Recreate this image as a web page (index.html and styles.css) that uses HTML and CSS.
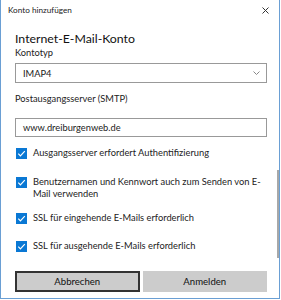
FILE: index.html
```html
<!DOCTYPE html>
<html lang="de">
<head>
<meta charset="utf-8">
<title>Konto hinzufügen</title>
<link rel="stylesheet" href="styles.css">
</head>
<body>
<div class="window">
  <div class="titlebar">
    <span class="title">Konto hinzufügen</span>
    <svg class="close" width="7" height="7" viewBox="0 0 7 7"><path d="M0.5 0.5L6.5 6.5M6.5 0.5L0.5 6.5" stroke="#333" stroke-width="1" fill="none"/></svg>
  </div>
  <div class="content">
    <h1 class="heading">Internet-E-Mail-Konto</h1>
    <div class="label">Kontotyp</div>
    <div class="field select">
      <span>IMAP4</span>
      <svg class="chevron" width="7" height="4" viewBox="0 0 7 4"><polyline points="0.5,0.5 3.5,3.5 6.5,0.5" stroke="#888" stroke-width="1" fill="none"/></svg>
    </div>
    <div class="label label-smtp">Postausgangsserver (SMTP)</div>
    <div class="field input"><span>www.dreiburgenweb.de</span></div>

    <div class="check r1">
      <span class="box"><svg width="11" height="11" viewBox="0 0 11 11"><polyline points="2.3,5.6 4.4,7.8 8.8,3.2" stroke="#fff" stroke-width="1.2" fill="none"/></svg></span>
      <span class="text">Ausgangsserver erfordert Authentifizierung</span>
    </div>
    <div class="check r2">
      <span class="box"><svg width="11" height="11" viewBox="0 0 11 11"><polyline points="2.3,5.6 4.4,7.8 8.8,3.2" stroke="#fff" stroke-width="1.2" fill="none"/></svg></span>
      <span class="text">Benutzernamen und Kennwort auch zum Senden von E-Mail verwenden</span>
    </div>
    <div class="check r3">
      <span class="box"><svg width="11" height="11" viewBox="0 0 11 11"><polyline points="2.3,5.6 4.4,7.8 8.8,3.2" stroke="#fff" stroke-width="1.2" fill="none"/></svg></span>
      <span class="text">SSL für eingehende E-Mails erforderlich</span>
    </div>
    <div class="check r4">
      <span class="box"><svg width="11" height="11" viewBox="0 0 11 11"><polyline points="2.3,5.6 4.4,7.8 8.8,3.2" stroke="#fff" stroke-width="1.2" fill="none"/></svg></span>
      <span class="text">SSL für ausgehende E-Mails erforderlich</span>
    </div>

    <div class="buttons">
      <div class="btn btn-primary">Abbrechen</div>
      <div class="btn">Anmelden</div>
    </div>
  </div>
  <div class="scrollbar"></div>
</div>
</body>
</html>
```
FILE: styles.css
```css
html, body {
  margin: 0;
  padding: 0;
  background: #ffffff;
}
body {
  font-family: "Lato", "Noto Sans", sans-serif;
  color: #111;
}
.window {
  position: relative;
  width: 278px;
  height: 298px;
  border-left: 1px solid #6a9fd4;
  border-right: 1px solid #6a9fd4;
  border-bottom: 1px solid #6a9fd4;
  background: #fff;
}
.titlebar {
  height: 20px;
  display: flex;
  align-items: center;
  justify-content: space-between;
  padding: 0 10px 0 7px;
}
.title {
  font-size: 8.2px;
  line-height: 20px;
  color: #222;
}
.close {
  display: block;
}
.content {
  padding: 0 12px 0 14px;
}
.heading {
  margin: 11px 0 0 0;
  font-size: 12.3px;
  font-weight: normal;
  line-height: 16px;
  color: #111;
}
.label {
  font-size: 9.3px;
  line-height: 12px;
  color: #222;
}
.label-smtp {
  margin-top: 10px;
}
.field {
  box-sizing: border-box;
  height: 20px;
  border: 1px solid #999;
  display: flex;
  align-items: center;
  justify-content: space-between;
  padding: 0 6px 0 7px;
  font-size: 9.3px;
  color: #222;
}
.select {
  margin-top: 4px;
}
.input {
  margin-top: 13px;
  height: 19px;
}
.chevron {
  display: block;
}
.check {
  display: flex;
  align-items: flex-start;
  gap: 6px;
  padding-left: 1px;
}
.r1 { margin-top: 10px; }
.r2 { margin-top: 17px; }
.r3 { margin-top: 13px; }
.r4 { margin-top: 16px; }
.box {
  flex: none;
  width: 11px;
  height: 11px;
  margin-top: 1px;
  background: #0a78d4;
  display: block;
}
.box svg {
  display: block;
}
.text {
  font-size: 9.3px;
  line-height: 11.5px;
  color: #222;
}
.buttons {
  margin-top: 19px;
  display: grid;
  grid-template-columns: 1fr 1fr;
  gap: 3px;
}
.btn {
  box-sizing: border-box;
  height: 21px;
  background: #cccccc;
  display: flex;
  align-items: center;
  justify-content: center;
  font-size: 9.6px;
  color: #111;
}
.btn-primary {
  border: 2px solid #333;
}
.scrollbar {
  position: absolute;
  left: 276px;
  top: 170px;
  width: 2px;
  height: 88px;
  background: #a8a8a8;
}
```
